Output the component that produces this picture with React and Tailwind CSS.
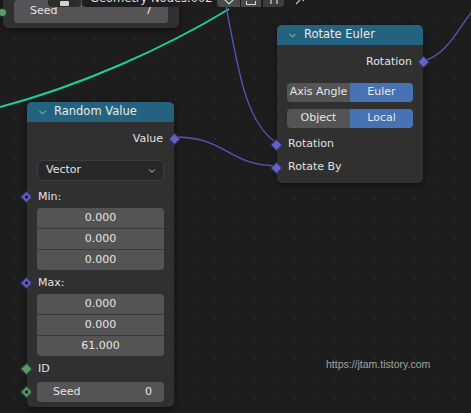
import { ChevronDown } from "lucide-react";

const font = { fontFamily: '"DejaVu Sans", "Noto Sans", sans-serif' };

function Socket({ color = "purple", dot = false, round = false, side = "left" }) {
  const fill = color === "green" ? "bg-[#5c9a64]" : "bg-[#6363c7]";
  return (
    <span
      className={`absolute top-1/2 flex -translate-y-1/2 items-center justify-center ${
        side === "left" ? "-left-[5px]" : "-right-[5px]"
      }`}
    >
      <span
        className={`flex h-[9px] w-[9px] items-center justify-center border border-black/60 ${fill} ${
          round ? "rounded-full" : "rotate-45"
        }`}
      >
        {dot ? <span className="h-[3px] w-[3px] bg-[#1a1a1a]" /> : null}
      </span>
    </span>
  );
}

function Header({ title }) {
  return (
    <div className="flex h-5 items-center gap-[6px] rounded-t-[5px] bg-[#246380] pl-[10px] text-[11.5px] text-[#e8e8e8]">
      <ChevronDown size={11} strokeWidth={1.6} />
      <span>{title}</span>
    </div>
  );
}

function Row({ children, right = false, socket, h = "h-[22px]" }) {
  return (
    <div className={`relative flex items-center px-[11px] text-[11px] text-[#e2e2e2] ${h} ${right ? "justify-end" : ""}`}>
      {socket}
      {children}
    </div>
  );
}

function NumberStack({ values }) {
  return (
    <div className="mx-[10px] flex flex-col gap-px overflow-hidden rounded-[4px] bg-[#3a3a3a]">
      {values.map((v, i) => (
        <div key={i} className="flex h-5 items-center justify-center bg-[#545454] text-[11px] text-[#e4e4e4]">
          {v}
        </div>
      ))}
    </div>
  );
}

function Segmented({ left, right }) {
  return (
    <div className="mx-[10px] flex h-[19px] overflow-hidden rounded-[4px] text-[11px] text-[#e6e6e6]">
      <div className="flex flex-1 items-center justify-center bg-[#545454]">{left}</div>
      <div className="flex flex-1 items-center justify-center bg-[#4772b3]">{right}</div>
    </div>
  );
}

export default function App() {
  return (
    <div
      style={font}
      className="relative h-[413px] w-[471px] overflow-hidden bg-[#1d1d1d] bg-[radial-gradient(circle,#282828_1px,transparent_1.3px)] bg-[size:20px_20px] bg-[position:5px_9px]"
    >
      {/* wires */}
      <svg className="absolute inset-0" width="471" height="413" viewBox="0 0 471 413">
        <path d="M0,107 C80,86 165,48 229,9" fill="none" stroke="#1ccf9e" strokeWidth="2" />
        <path d="M225,0 C238,70 246,124 277,143" fill="none" stroke="#5656bd" strokeWidth="1.3" />
        <path d="M174,137 C228,137 226,165 277,166" fill="none" stroke="#5656bd" strokeWidth="1.3" />
        <path d="M423,61 C446,55 456,32 471,13" fill="none" stroke="#5656bd" strokeWidth="1.3" />
      </svg>

      {/* partially visible node at top-left */}
      <div className="absolute -top-[10px] left-[3px] w-[176px] rounded-b-[5px] bg-[#303030] pb-[5px] pt-[10px] shadow-[0_2px_6px_rgba(0,0,0,0.5)]">
        <div className="relative flex h-[23px] items-center">
          <span className="absolute -left-[5px] top-[8px] h-[9px] w-[9px] rounded-full border border-black/60 bg-[#5c9a64]" />
          <div className="mx-[11px] flex h-[23px] flex-1 items-center justify-between rounded-[4px] bg-[#545454] px-[16px] text-[11px] text-[#e4e4e4]">
            <span>Seed</span>
            <span>7</span>
          </div>
        </div>
      </div>

      {/* editor header, cut by the top edge */}
      <div className="absolute -top-[13px] left-[48px] flex h-5 items-stretch gap-px text-[11.5px] text-[#e0e0e0]">
        <div className="flex w-[33px] items-end justify-center rounded-[4px] bg-[#2c2c2c] pb-px">
          <span className="h-[5px] w-[9px] rounded-[1px] bg-[#d0d0d0]" />
        </div>
        <div className="flex w-[134px] items-end overflow-hidden whitespace-nowrap rounded-[4px] bg-[#1e1e1e] px-[8px] leading-[18px]">
          Geometry Nodes.002
        </div>
        <div className="flex w-[23px] items-end justify-center rounded-l-[4px] bg-[#4a4a4a] pb-[2px]">
          <svg width="12" height="6" viewBox="0 0 12 6"><path d="M1,0 L6,5 L11,0" fill="none" stroke="#d8d8d8" strokeWidth="1.2" /></svg>
        </div>
        <div className="flex w-[20px] items-end justify-center bg-[#4a4a4a] pb-[2px]">
          <span className="h-[4px] w-[10px] border-x border-b border-[#d8d8d8]" />
        </div>
        <div className="ml-px flex w-[21px] items-end justify-center rounded-r-[4px] bg-[#3d3d3d] pb-[2px]">
          <svg width="10" height="6" viewBox="0 0 10 6"><path d="M2,0 L2,5 M8,0 L8,5" stroke="#d8d8d8" strokeWidth="1.2" /></svg>
        </div>
        <div className="ml-[10px] flex items-end pb-[2px]">
          <svg width="10" height="7" viewBox="0 0 10 7"><path d="M1,6 L5,2 M6,0 L9,3" stroke="#bdbdbd" strokeWidth="1.2" /></svg>
        </div>
      </div>

      {/* Rotate Euler */}
      <div className="absolute left-[277px] top-[25px] w-[146px] rounded-[5px] bg-[#303030] pb-[4px] shadow-[0_2px_6px_rgba(0,0,0,0.5)]">
        <Header title="Rotate Euler" />
        <div className="mt-[6px]" />
        <Row right socket={<Socket side="right" />}>Rotation</Row>
        <div className="mt-[10px] flex flex-col gap-[7px]">
          <Segmented left="Axis Angle" right="Euler" />
          <Segmented left="Object" right="Local" />
        </div>
        <div className="mt-[5px]" />
        <Row h="h-[23px]" socket={<Socket />}>Rotation</Row>
        <Row h="h-[23px]" socket={<Socket />}>Rotate By</Row>
      </div>

      {/* Random Value */}
      <div className="absolute left-[27px] top-[102px] w-[147px] rounded-[5px] bg-[#303030] pb-[5px] shadow-[0_2px_6px_rgba(0,0,0,0.5)]">
        <Header title="Random Value" />
        <div className="mt-[6px]" />
        <Row right socket={<Socket side="right" />}>Value</Row>
        <div className="mx-[10px] mt-[10px] flex h-[21px] items-center justify-between rounded-[4px] border border-[#3c3c3c] bg-[#282828] pl-[8px] pr-[6px] text-[11px] text-[#e2e2e2]">
          <span>Vector</span>
          <ChevronDown size={10} strokeWidth={2} />
        </div>
        <div className="relative mt-[5px] flex h-[22px] items-center px-[11px] text-[11px] text-[#e2e2e2]">
          <Socket dot />
          Min:
        </div>
        <NumberStack values={["0.000", "0.000", "0.000"]} />
        <div className="relative mt-[2px] flex h-[22px] items-center px-[11px] text-[11px] text-[#e2e2e2]">
          <Socket dot />
          Max:
        </div>
        <NumberStack values={["0.000", "0.000", "61.000"]} />
        <Row h="h-[26px]" socket={<Socket color="green" />}>
          ID
        </Row>
        <div className="relative flex h-[20px] items-center">
          <Socket color="green" dot />
          <div className="mx-[10px] flex h-[20px] flex-1 items-center justify-between rounded-[4px] bg-[#545454] pl-[16px] pr-[12px] text-[11px] text-[#e4e4e4]">
            <span>Seed</span>
            <span>0</span>
          </div>
        </div>
      </div>

      {/* watermark */}
      <div
        className="absolute left-[326px] top-[357px] text-[10.5px] text-[#a3a3a3]"
        style={{ fontFamily: '"Liberation Sans", Arial, sans-serif' }}
      >
        https://jtam.tistory.com
      </div>
    </div>
  );
}
